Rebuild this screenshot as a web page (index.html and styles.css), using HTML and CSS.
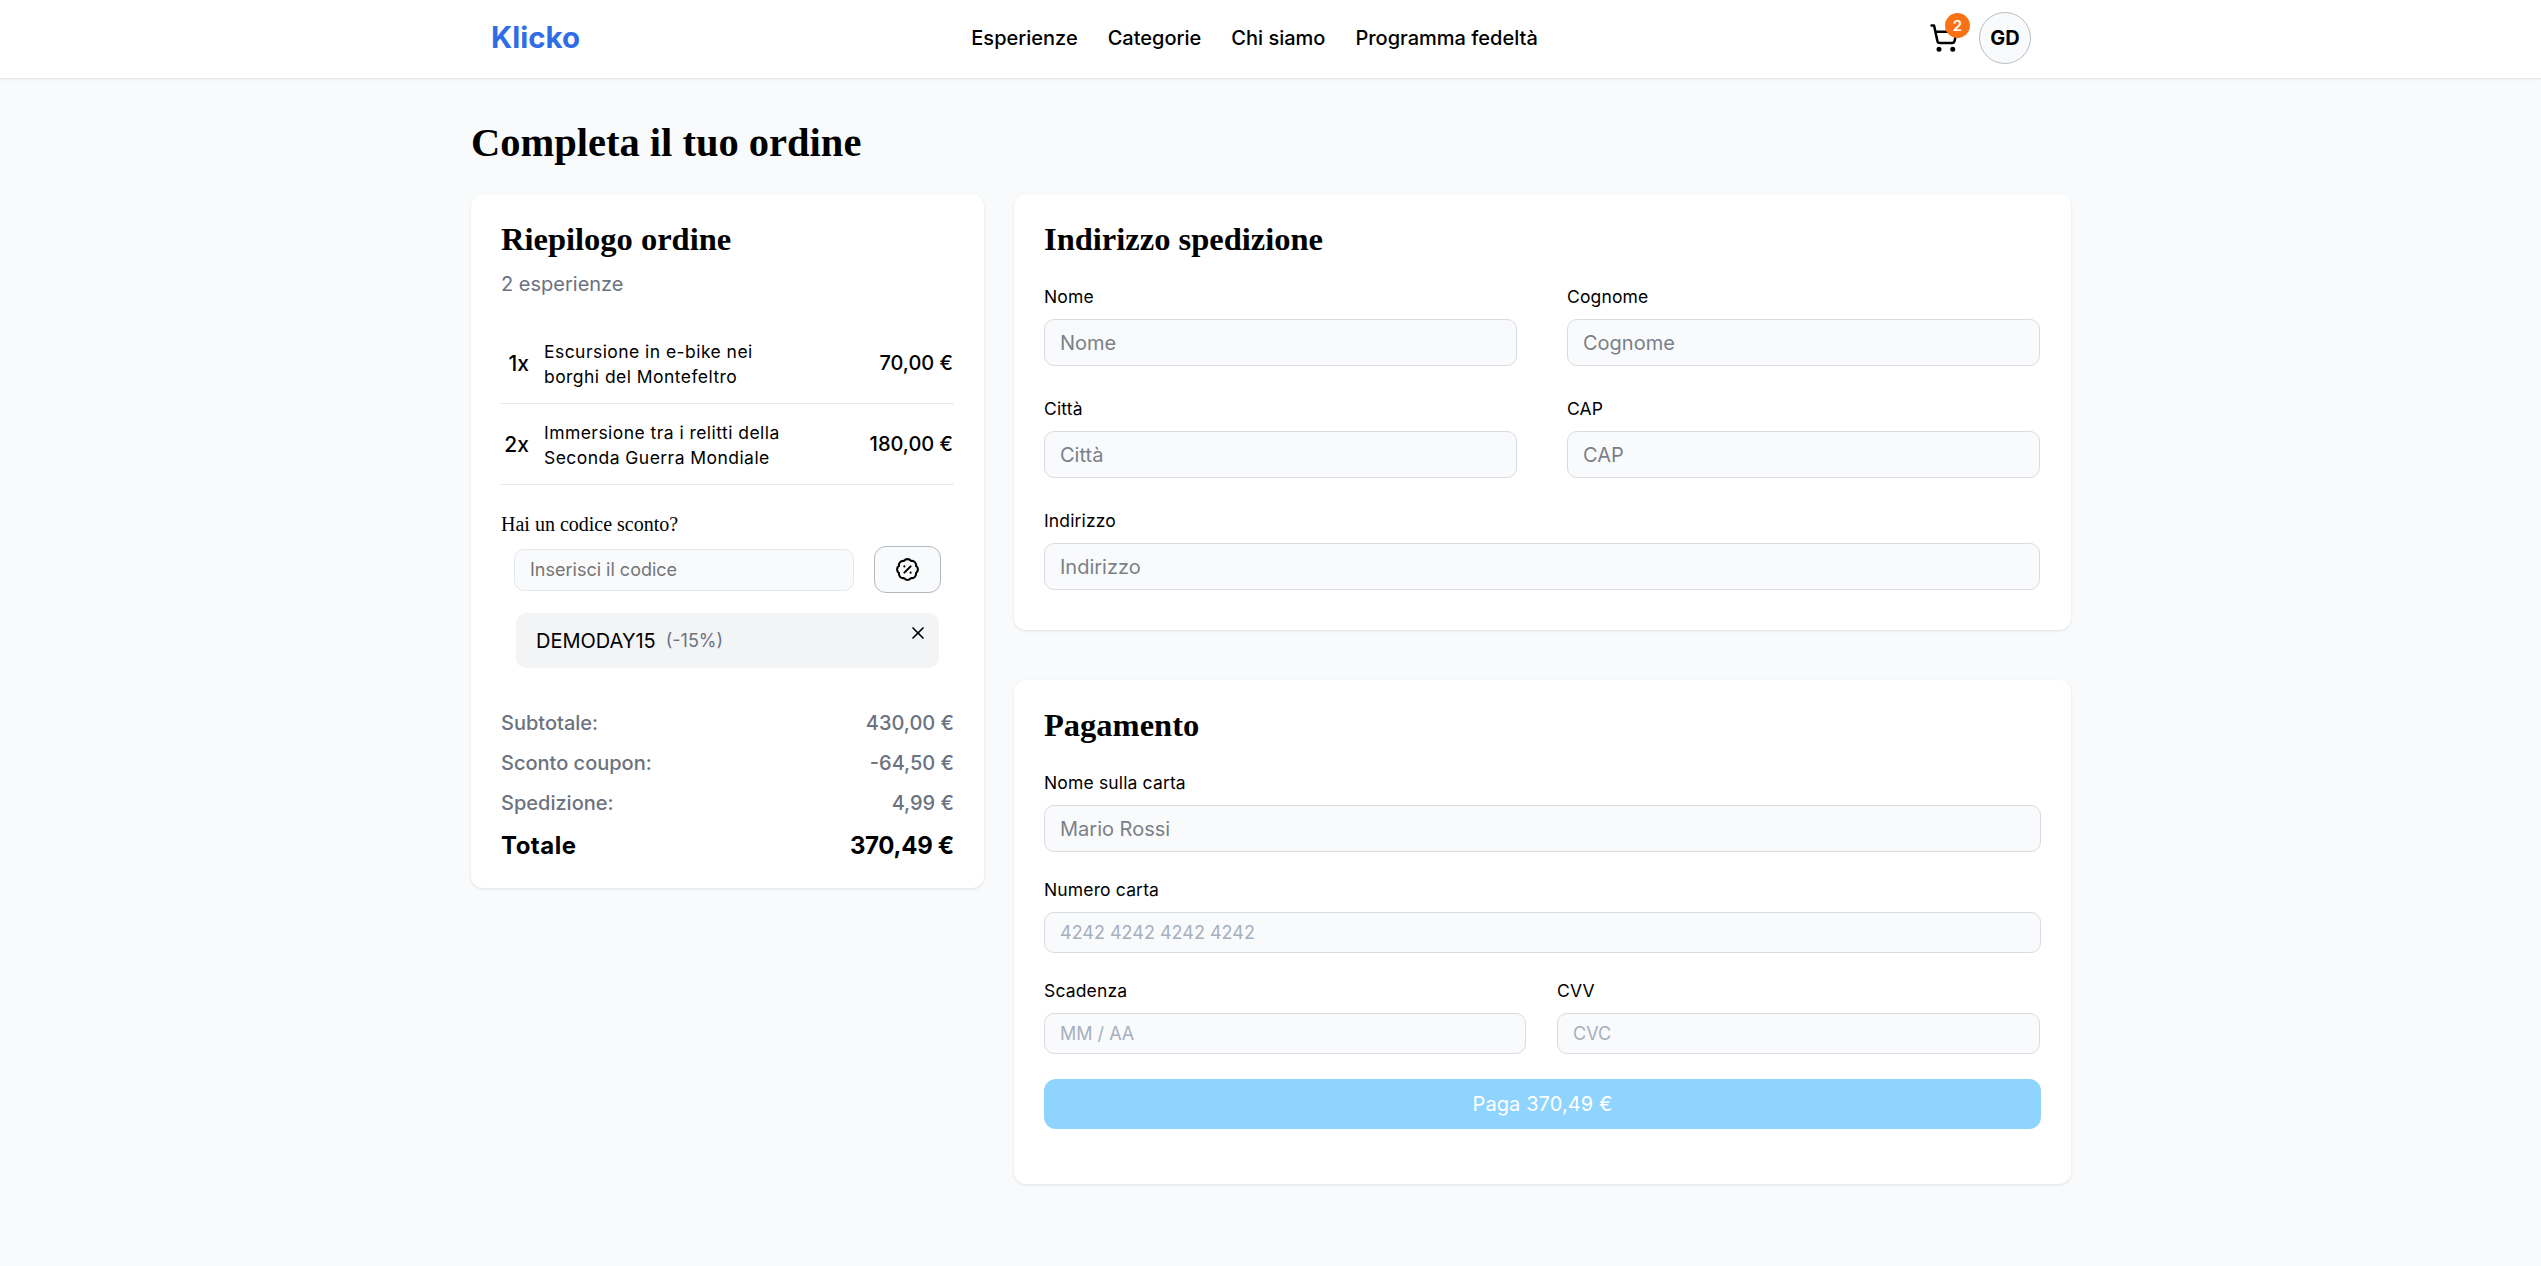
FILE: index.html
```html
<!DOCTYPE html>
<html lang="it">
<head>
    <meta charset="UTF-8">
    <meta name="viewport" content="width=device-width, initial-scale=1.0">
    <title>Klicko - Completa il tuo ordine</title>
    <link rel="stylesheet" href="styles.css">
</head>
<body>
    <header class="topbar">
        <a class="logo" href="#">Klicko</a>
        <nav class="nav">
            <a href="#">Esperienze</a>
            <a href="#">Categorie</a>
            <a href="#">Chi siamo</a>
            <a href="#">Programma fedeltà</a>
        </nav>
        <div class="user-box">
            <div class="cart">
                <svg viewBox="0 0 24 24" fill="none" stroke="currentColor" stroke-width="2" stroke-linecap="round" stroke-linejoin="round">
                    <circle cx="8" cy="21" r="1"/>
                    <circle cx="19" cy="21" r="1"/>
                    <path d="M2.05 2.05h2l2.66 12.42a2 2 0 0 0 2 1.58h9.78a2 2 0 0 0 1.95-1.57l1.65-7.43H5.12"/>
                </svg>
                <span class="cart-badge">2</span>
            </div>
            <div class="avatar">GD</div>
        </div>
    </header>

    <main class="page">
        <h1 class="page-title">Completa il tuo ordine</h1>
        <div class="checkout">
            <section class="card summary">
                <h2 class="card-title">Riepilogo ordine</h2>
                <p class="summary-count">2 esperienze</p>

                <div class="item">
                    <span class="item-qty">1x</span>
                    <span class="item-name">Escursione in e-bike nei<br>borghi del Montefeltro</span>
                    <span class="item-price">70,00 €</span>
                </div>
                <div class="item">
                    <span class="item-qty">2x</span>
                    <span class="item-name">Immersione tra i relitti della<br>Seconda Guerra Mondiale</span>
                    <span class="item-price">180,00 €</span>
                </div>

                <p class="coupon-title">Hai un codice sconto?</p>
                <div class="coupon-form">
                    <input class="coupon-input" type="text" placeholder="Inserisci il codice">
                    <button class="coupon-btn" type="button" aria-label="Applica codice">
                        <svg viewBox="0 0 24 24" fill="none" stroke="currentColor" stroke-width="2" stroke-linecap="round" stroke-linejoin="round">
                            <path d="M3.85 8.62a4 4 0 0 1 4.78-4.77 4 4 0 0 1 6.74 0 4 4 0 0 1 4.78 4.78 4 4 0 0 1 0 6.74 4 4 0 0 1-4.77 4.78 4 4 0 0 1-6.75 0 4 4 0 0 1-4.78-4.77 4 4 0 0 1 0-6.76Z"/>
                            <path d="m15 9-6 6"/>
                            <path d="M9 9h.01"/>
                            <path d="M15 15h.01"/>
                        </svg>
                    </button>
                </div>
                <div class="coupon-chip">
                    <span class="coupon-code">DEMODAY15</span>
                    <span class="coupon-off">(-15%)</span>
                    <svg class="coupon-close" viewBox="0 0 24 24" fill="none" stroke="currentColor" stroke-width="2" stroke-linecap="round" stroke-linejoin="round">
                        <path d="M18 6 6 18"/>
                        <path d="m6 6 12 12"/>
                    </svg>
                </div>

                <div class="totals">
                    <div class="total-row"><span>Subtotale:</span><span>430,00 €</span></div>
                    <div class="total-row"><span>Sconto coupon:</span><span>-64,50 €</span></div>
                    <div class="total-row"><span>Spedizione:</span><span>4,99 €</span></div>
                    <div class="total-row grand"><span class="grand-label">Totale</span><span>370,49 €</span></div>
                </div>
            </section>

            <div class="forms">
                <section class="card address">
                    <h2 class="card-title">Indirizzo spedizione</h2>
                    <div class="address-grid">
                        <div class="field">
                            <label>Nome</label>
                            <input type="text" placeholder="Nome">
                        </div>
                        <div class="field">
                            <label>Cognome</label>
                            <input type="text" placeholder="Cognome">
                        </div>
                        <div class="field">
                            <label>Città</label>
                            <input type="text" placeholder="Città">
                        </div>
                        <div class="field">
                            <label>CAP</label>
                            <input type="text" placeholder="CAP">
                        </div>
                        <div class="field wide">
                            <label>Indirizzo</label>
                            <input type="text" placeholder="Indirizzo">
                        </div>
                    </div>
                </section>

                <section class="card payment">
                    <h2 class="card-title">Pagamento</h2>
                    <div class="field">
                        <label>Nome sulla carta</label>
                        <input type="text" placeholder="Mario Rossi">
                    </div>
                    <div class="field stripe">
                        <label>Numero carta</label>
                        <input type="text" placeholder="4242 4242 4242 4242">
                    </div>
                    <div class="card-row">
                        <div class="field stripe">
                            <label>Scadenza</label>
                            <input type="text" placeholder="MM / AA">
                        </div>
                        <div class="field stripe">
                            <label>CVV</label>
                            <input type="text" placeholder="CVC">
                        </div>
                    </div>
                    <button class="pay-btn" type="button">Paga 370,49 €</button>
                </section>
            </div>
        </div>
    </main>
</body>
</html>
```

FILE: styles.css
```css
* {
    box-sizing: border-box;
}
body {
    margin: 0;
    background-color: #f9fafb;
    color: #000;
    font-family: Inter, "Noto Sans", sans-serif;
    font-size: 20px;
}
a {
    color: inherit;
    text-decoration: none;
}

/* header */
.topbar {
    height: 79px;
    padding: 0 510px 2px 491px;
    display: flex;
    align-items: center;
    justify-content: space-between;
    background-color: #fff;
    border-bottom: 1px solid #e5e7eb;
    box-shadow: 0 1px 2px rgba(0, 0, 0, 0.05);
}
.logo {
    margin-top: -2px;
    color: #2f6ce5;
    font-size: 29.5px;
    font-weight: 700;
}
.nav {
    display: flex;
    gap: 30px;
    font-size: 20px;
    font-weight: 500;
}
.user-box {
    display: flex;
    align-items: center;
    gap: 20px;
}
.cart {
    position: relative;
    width: 30px;
    height: 30px;
}
.cart svg {
    display: block;
    width: 100%;
    height: 100%;
}
.cart-badge {
    position: absolute;
    top: -10px;
    right: -11px;
    width: 25px;
    height: 25px;
    border-radius: 50%;
    background-color: #f97316;
    color: #fff;
    font-size: 15px;
    font-weight: 600;
    display: flex;
    align-items: center;
    justify-content: center;
}
.avatar {
    width: 52px;
    height: 52px;
    border-radius: 50%;
    border: 1px solid #b9bcc2;
    background-color: #f9fafb;
    font-size: 20px;
    font-weight: 700;
    display: flex;
    align-items: center;
    justify-content: center;
}

/* page */
.page {
    width: 1600px;
    margin: 0 0 0 471px;
    padding-bottom: 82px;
}
.page-title {
    margin: 0;
    padding-top: 38px;
    height: 115px;
    font-family: "Liberation Serif", serif;
    font-size: 40.5px;
    line-height: 52px;
    font-weight: 700;
}
.checkout {
    display: grid;
    grid-template-columns: 513px 1057px;
    gap: 30px;
    align-items: start;
}
.forms {
    display: flex;
    flex-direction: column;
    gap: 50px;
}
.card {
    background-color: #fff;
    border-radius: 12px;
    padding: 30px;
    box-shadow: 0 1px 3px rgba(0, 0, 0, 0.1);
}
.card-title {
    margin: 0;
    font-family: "Liberation Serif", serif;
    font-size: 32.5px;
    line-height: 30px;
    font-weight: 700;
}

/* summary */
.summary {
    padding-bottom: 21px;
}
.summary-count {
    margin: 17px 0 0;
    height: 52px;
    color: #6b7280;
    font-size: 20px;
    line-height: 26px;
}
.item {
    height: 81px;
    display: flex;
    align-items: center;
    border-bottom: 1px solid #e5e7eb;
}
.item-qty {
    width: 28px;
    text-align: right;
    font-size: 21px;
    font-weight: 500;
}
.item-name {
    flex: 1;
    margin: 2px 0 0 15px;
    font-size: 17.5px;
    letter-spacing: 0.45px;
    line-height: 25px;
}
.item-price {
    padding-right: 1px;
    font-size: 20px;
    font-weight: 500;
}
.coupon-title {
    margin: 26px 0 0;
    font-family: "Liberation Serif", serif;
    font-size: 20px;
    line-height: 26px;
}
.coupon-form {
    margin: 9px 13px 0;
    display: flex;
    align-items: center;
    gap: 20px;
}
.coupon-input {
    flex: 1;
    min-width: 0;
    height: 42px;
    padding: 0 15px;
    border: 1px solid #e5e7eb;
    border-radius: 10px;
    background-color: #f9fafb;
    font-family: inherit;
    font-size: 18px;
}
.coupon-btn {
    width: 67px;
    height: 47px;
    padding: 0;
    border: 1px solid #b4b7bd;
    border-radius: 12px;
    background-color: #f9fafb;
    color: #000;
    display: flex;
    align-items: center;
    justify-content: center;
}
.coupon-btn svg {
    width: 25px;
    height: 25px;
}
.coupon-chip {
    position: relative;
    margin: 20px 15px 0;
    height: 55px;
    padding: 0 20px;
    display: flex;
    align-items: center;
    gap: 10px;
    border-radius: 10px;
    background-color: #f3f4f6;
}
.coupon-code {
    font-size: 20px;
}
.coupon-off {
    color: #6b7280;
    font-size: 18px;
}
.coupon-close {
    position: absolute;
    top: 10px;
    right: 11px;
    width: 20px;
    height: 20px;
}
.totals {
    margin-top: 35px;
}
.total-row {
    height: 40px;
    display: flex;
    align-items: center;
    justify-content: space-between;
    color: #6b7280;
    font-size: 20px;
    font-weight: 500;
}
.total-row.grand {
    height: 44px;
    color: #000;
    font-size: 24px;
    font-weight: 700;
    letter-spacing: -0.3px;
}
.grand-label {
    letter-spacing: 0.5px;
}

/* forms */
.address {
    padding-bottom: 40px;
}
.address-grid {
    margin-top: 30px;
    display: grid;
    grid-template-columns: 473px 473px;
    column-gap: 50px;
    row-gap: 30px;
}
.field {
    display: flex;
    flex-direction: column;
}
.field.wide {
    grid-column: 1 / 3;
}
.field label {
    height: 35px;
    font-size: 17.5px;
    letter-spacing: 0.15px;
    line-height: 26px;
}
.field input {
    width: 100%;
    height: 47px;
    padding: 0 15px;
    border: 1px solid #d9dbe0;
    border-radius: 10px;
    background-color: #f9fafb;
    font-family: inherit;
    font-size: 20px;
}
.field input::placeholder {
    color: #7b8088;
    opacity: 1;
}
.field.stripe input {
    height: 41px;
    font-size: 18px;
}
.field.stripe input::placeholder {
    color: #a6afbc;
}
.payment {
    height: 504px;
}
.payment .card-title {
    margin-bottom: 30px;
}
.payment .field {
    margin-bottom: 25px;
}
.card-row {
    display: grid;
    grid-template-columns: 482px 483px;
    column-gap: 31px;
}
.pay-btn {
    display: block;
    width: 100%;
    height: 50px;
    border: none;
    border-radius: 12px;
    background-color: #8fd4fe;
    color: #fff;
    font-family: inherit;
    font-size: 20px;
    letter-spacing: 0.1px;
}
```
